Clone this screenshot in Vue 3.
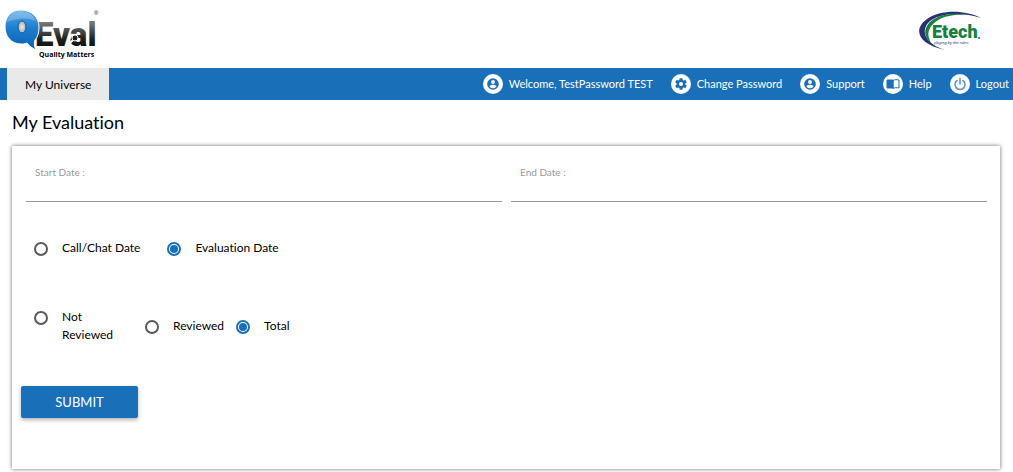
<script setup>
import { ref } from 'vue'

const links = [
  { label: 'Welcome, TestPassword TEST', icon: 'user' },
  { label: 'Change Password', icon: 'gear' },
  { label: 'Support', icon: 'user' },
  { label: 'Help', icon: 'book' },
  { label: 'Logout', icon: 'power' }
]
const icons = {
  user: 'M12 2a10 10 0 1 0 0 20 10 10 0 0 0 0-20zm0 3.2a3.3 3.3 0 1 1 0 6.600 3.300 3.300 0 0 1 0-6.600zm0 14.200a7.200 7.200 0 0 1-6-3.200c0-2 4-3.100 6-3.100s6 1.100 6 3.100a7.200 7.200 0 0 1-6 3.200z',
  gear: 'M19.430 12.980a8 8 0 0 0 0-1.960l2.110-1.650a.5.5 0 0 0 .12-.64l-2-3.460a.5.5 0 0 0-.61-.22l-2.490 1a7.300 7.300 0 0 0-1.690-.98l-.38-2.650A.5.5 0 0 0 14 2h-4a.5.5 0 0 0-.49.42l-.38 2.650a7.700 7.700 0 0 0-1.690.98l-2.490-1a.5.5 0 0 0-.61.22l-2 3.460a.5.5 0 0 0 .12.64l2.110 1.650a8 8 0 0 0 0 1.960l-2.110 1.650a.5.5 0 0 0-.12.64l2 3.460c.12.220.39.300.61.220l2.490-1c.52.400 1.080.730 1.690.980l.38 2.650c.03.240.24.420.49.420h4c.25 0 .46-.18.490-.42l.38-2.650a7.300 7.300 0 0 0 1.690-.98l2.490 1c.23.090.49 0 .61-.22l2-3.460a.5.5 0 0 0-.12-.64zM12 15.500a3.500 3.500 0 1 1 0-7 3.500 3.500 0 0 1 0 7z'
}
const dateType = ref('evaluation')
const status = ref('total')
const startDate = ref('')
const endDate = ref('')
</script>

<template>
  <div class="page">
    <header class="brand">
      <svg class="qeval" width="104" height="62" viewBox="0 0 104 62" role="img" aria-label="QEval Quality Matters">
        <defs>
          <linearGradient id="ink" x1="0" y1="0" x2="0" y2="1">
            <stop offset="0.2" stop-color="#777" />
            <stop offset="0.6" stop-color="#222" />
            <stop offset="1" stop-color="#000" />
          </linearGradient>
          <linearGradient id="bubble" x1="0" y1="0" x2="0" y2="1">
            <stop offset="0" stop-color="#5aa9e6" />
            <stop offset="0.45" stop-color="#1c7fd0" />
            <stop offset="1" stop-color="#0a5fb4" />
          </linearGradient>
          <radialGradient id="hole">
            <stop offset="0" stop-color="#eee" />
            <stop offset="1" stop-color="#aaa" />
          </radialGradient>
        </defs>
        <text x="35" y="46" class="eval" fill="url(#ink)">Eval</text>
        <path d="M21 10C11 10 5 17 5 27s7 17 16 17c2 0 4 0 6-1 2 3 5 5 9 7-2-4-2-7-1-10 3-3 4-8 4-13 0-10-8-17-18-17z" fill="url(#bubble)" stroke="#fff" stroke-width="1" />
        <path d="M7 22c2-8 8-11 14-11s13 4 15 10c-10-4-19-3-29 1z" fill="#fff" opacity="0.25" />
        <ellipse cx="22" cy="27" rx="4" ry="6" fill="url(#hole)" stroke="#0a58a6" />
        <circle cx="75" cy="38" r="3" fill="#222" stroke="#fff" />
        <path d="m73 40-4 4" stroke="#fff" stroke-width="2" />
        <text x="94" y="15" class="mark">®</text>
        <text x="39" y="57" class="tagline">Quality Matters</text>
      </svg>
      <svg class="etech" width="64" height="42" viewBox="0 0 64 42" role="img" aria-label="Etech playing by the rules">
        <path d="M63 8C48 0 23-1 9 9-5 19-1 34 27 40 9 34 2 23 10 13 20 2 45 2 63 8z" fill="#2b2f73" />
        <path d="M50 5C34 2 19 5 11 13 5 20 6 28 14 34 9 27 9 20 15 14 23 6 36 4 50 5z" fill="#14813f" />
        <text x="14" y="28" class="etech-name">Etech</text>
        <circle cx="61" cy="28" r="1" fill="#14813f" />
        <text x="16" y="34" class="etech-tag">playing by the rules</text>
      </svg>
    </header>

    <nav class="bar">
      <a class="tab" href="#">My Universe</a>
      <div class="links">
        <a v-for="link in links" :key="link.label" class="link" href="#">
          <span class="badge">
            <svg v-if="icons[link.icon]" width="14" height="14" viewBox="0 0 24 24"><path :d="icons[link.icon]" fill="#1a6fb9" fill-rule="evenodd" /></svg>
            <svg v-else-if="link.icon === 'book'" width="14" height="14" viewBox="0 0 14 14" fill="none" stroke="#1a6fb9">
              <path d="M7 3H1v8h6V3z" fill="#1a6fb9" />
              <path d="M7 3.500C8.500 2.500 11 2.500 13 3v8c-2-.5-4.500-.5-6 .5z" />
            </svg>
            <svg v-else width="14" height="14" viewBox="0 0 14 14" fill="none" stroke="#5b9bd0" stroke-width="1.600" stroke-linecap="round">
              <path d="M7 1.500V7M4 3.500a5 5 0 1 0 6 0" />
            </svg>
          </span>
          <span>{{ link.label }}</span>
        </a>
      </div>
    </nav>

    <main>
      <h1>My Evaluation</h1>
      <form class="card" @submit.prevent>
        <div class="dates">
          <div class="field">
            <label for="start">Start Date :</label>
            <input id="start" v-model="startDate" type="text" />
          </div>
          <div class="field">
            <label for="end">End Date :</label>
            <input id="end" v-model="endDate" type="text" />
          </div>
        </div>
        <div class="options by-date">
          <label class="option"><input v-model="dateType" type="radio" name="date-type" value="call" /><span>Call/Chat Date</span></label>
          <label class="option"><input v-model="dateType" type="radio" name="date-type" value="evaluation" /><span>Evaluation Date</span></label>
        </div>
        <div class="options by-status">
          <label class="option narrow"><input v-model="status" type="radio" name="status" value="not-reviewed" /><span>Not Reviewed</span></label>
          <label class="option"><input v-model="status" type="radio" name="status" value="reviewed" /><span>Reviewed</span></label>
          <label class="option"><input v-model="status" type="radio" name="status" value="total" /><span>Total</span></label>
        </div>
        <button class="submit" type="submit">SUBMIT</button>
      </form>
    </main>
  </div>
</template>

<style>
body {
  background: #fff;
}
</style>

<style scoped>
.page {
  padding-bottom: 3px;
  font-family: Lato, "Liberation Sans", sans-serif;
  font-size: 12px;
  font-variant-ligatures: none;
  line-height: 18px;
  color: #000;
}
.brand {
  display: flex;
  justify-content: space-between;
  height: 68px;
}
.etech {
  margin: 10px 31px 0 0;
}
.eval {
  font: 900 33px Roboto, sans-serif;
}
.mark {
  font: 6px "Liberation Sans", sans-serif;
}
.tagline {
  font: bold 7px "Open Sans", sans-serif;
}
.etech-name {
  font: 900 18px Roboto, sans-serif;
  fill: #14813f;
}
.etech-tag {
  font: italic 4px "Liberation Sans", sans-serif;
  fill: #2b2f73;
}
.bar {
  display: flex;
  justify-content: space-between;
  height: 32px;
  padding: 0 4px 0 7px;
  background: #1a6fb9;
}
.tab {
  padding: 8px 18px 6px;
  background: #e9e9e9;
  color: #000;
  text-decoration: none;
}
.links {
  display: flex;
  gap: 18px;
}
.link {
  display: flex;
  align-items: center;
  gap: 6px;
  color: #fff;
  font-size: 11px;
  text-decoration: none;
  white-space: nowrap;
}
.badge {
  display: flex;
  align-items: center;
  justify-content: center;
  width: 20px;
  height: 20px;
  border-radius: 50%;
  background: #fff;
}
main {
  padding: 0 13px 0 12px;
}
h1 {
  margin: 0;
  padding: 10px 0 12px;
  font-size: 18px;
  font-weight: 400;
  line-height: 24px;
}
.card {
  padding: 16px 13px 51px 14px;
  background: #fff;
  box-shadow: 0 0 4px rgba(0, 0, 0, 0.6);
}
.dates {
  display: grid;
  grid-template-columns: 1fr 1fr;
  gap: 9px;
}
.field label {
  display: block;
  padding-left: 9px;
  font-size: 10px;
  color: #999;
  height: 20px;
  line-height: 20px;
}
.field input {
  display: block;
  box-sizing: border-box;
  width: 100%;
  height: 20px;
  padding: 0 9px;
  border: 0;
  border-bottom: 1px solid #999;
  background: none;
  font: inherit;
  outline: 0;
}
.options {
  display: flex;
  align-items: center;
  padding-left: 8px;
}
.by-date {
  margin-top: 37px;
  gap: 27px;
}
.by-status {
  margin-top: 51px;
  gap: 12px;
}
.option {
  display: flex;
  align-items: flex-start;
  gap: 14px;
}
.narrow {
  width: 99px;
}
.narrow span {
  width: 56px;
}
.option input {
  appearance: none;
  box-sizing: border-box;
  flex: none;
  width: 14px;
  height: 14px;
  margin: 3px 0 0;
  padding: 1px;
  border: 2px solid #5a5a5a;
  border-radius: 50%;
}
.option input:checked {
  border-color: #1a6fb9;
  background: #1a6fb9 content-box;
}
.submit {
  display: block;
  width: 117px;
  height: 32px;
  margin: 42px 0 0 -5px;
  padding: 0;
  border: 0;
  border-radius: 2px;
  background: #1a6fb9;
  box-shadow: 0 2px 4px rgba(0, 0, 0, 0.3);
  color: #fff;
  font: inherit;
  font-size: 13px;
}
</style>
